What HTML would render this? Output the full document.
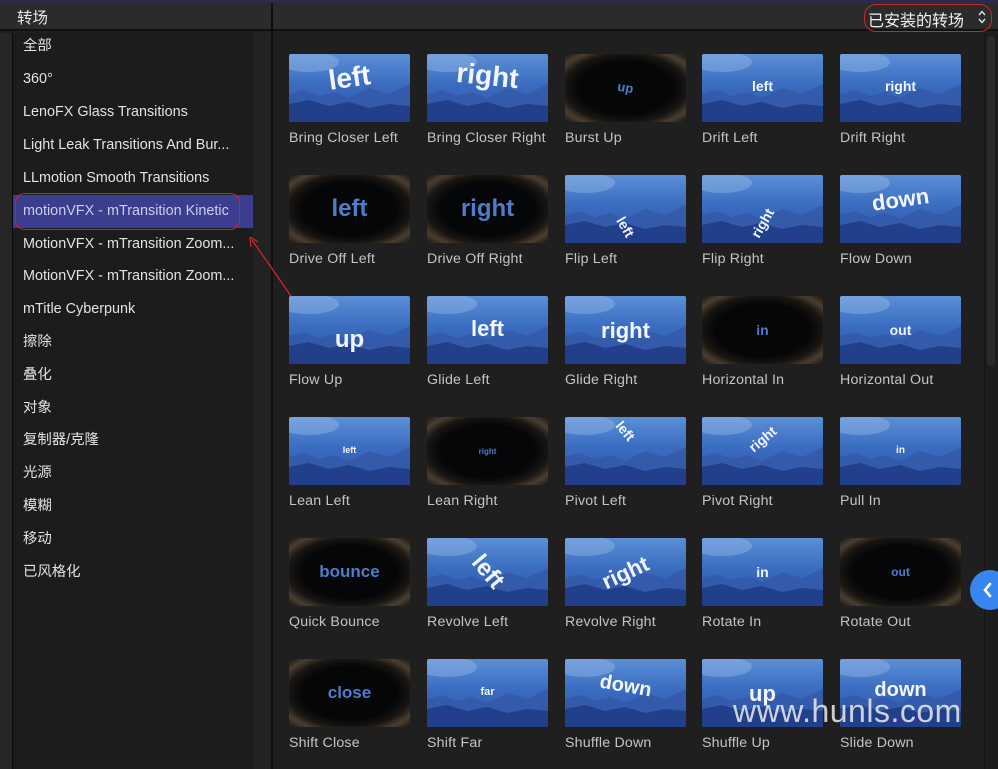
<!DOCTYPE html>
<html><head><meta charset="utf-8"><style>
*{margin:0;padding:0;box-sizing:border-box}
body{width:998px;height:769px;overflow:hidden;background:#1f1f1f;font-family:"Liberation Sans","Noto Sans CJK SC",sans-serif;position:relative}
.abs{position:absolute}
.side-item{position:absolute;left:23px;font-size:14.4px;color:#e2e2e2;line-height:20px;white-space:nowrap}
.th{position:absolute;width:121px;height:68px;overflow:hidden;border-radius:2px}
.blue{background:linear-gradient(180deg,#5b8fd6 0%,#3a6cc0 45%,#2d54a8 100%)}
.dark{background:radial-gradient(ellipse at 50% 50%,#050608 55%,#1a1612 72%,#4a3e30 85%,#1a1612 100%)}
.th svg{position:absolute;left:0;bottom:0}
.tt{position:absolute;width:100%;text-align:center;font-weight:bold;color:#f4f6ff;white-space:nowrap}
.dk .tt{color:#4f7ccc}
.lb{position:absolute;font-size:14.2px;color:#c4c4c4;white-space:nowrap;letter-spacing:0.2px}
</style></head><body>
<div class="abs" style="left:0;top:0;width:998px;height:3px;background:#2a2a4a"></div>
<div class="abs" style="left:0;top:3px;width:998px;height:28px;background:#2b2b2b;border-bottom:2px solid #111"></div>
<div class="abs" style="left:271px;top:3px;width:2px;height:766px;background:#0e0e0e"></div>
<div class="abs" style="left:17px;top:6px;font-size:15.5px;color:#e6e6e6">转场</div>
<div class="abs" style="left:864px;top:4px;width:128px;height:28px;border:1.5px solid #c8282c;border-radius:12px"></div>
<div class="abs" style="left:868px;top:7px;font-size:16px;color:#f0f0f0">已安装的转场</div>
<svg class="abs" style="left:977px;top:9px" width="10" height="16"><path d="M2 6 L5 2.5 L8 6 M2 10 L5 13.5 L8 10" stroke="#ddd" stroke-width="1.5" fill="none"/></svg>
<div class="abs" style="left:0;top:33px;width:12px;height:736px;background:#262626"></div>
<div class="abs" style="left:12px;top:33px;width:1px;height:736px;background:#0c0c0c"></div>
<div class="abs" style="left:13px;top:33px;width:240px;height:736px;background:#1c1c1c"></div>
<div class="abs" style="left:253px;top:33px;width:18px;height:736px;background:#222"></div>
<div class="abs" style="left:13px;top:195px;width:240px;height:33px;background:#3b3e8e"></div>
<div class="abs" style="left:15px;top:193px;width:225px;height:37px;border:1.5px solid #c8282c;border-radius:10px"></div>
<div class="side-item" style="top:36px">全部</div>
<div class="side-item" style="top:69px">360°</div>
<div class="side-item" style="top:102px">LenoFX Glass Transitions</div>
<div class="side-item" style="top:135px">Light Leak Transitions And Bur...</div>
<div class="side-item" style="top:168px">LLmotion Smooth Transitions</div>
<div class="side-item" style="top:201px;color:#c9cdf2">motionVFX - mTransition Kinetic</div>
<div class="side-item" style="top:234px">MotionVFX - mTransition Zoom...</div>
<div class="side-item" style="top:266px">MotionVFX - mTransition Zoom...</div>
<div class="side-item" style="top:299px">mTitle Cyberpunk</div>
<div class="side-item" style="top:332px">擦除</div>
<div class="side-item" style="top:365px">叠化</div>
<div class="side-item" style="top:398px">对象</div>
<div class="side-item" style="top:430px">复制器/克隆</div>
<div class="side-item" style="top:463px">光源</div>
<div class="side-item" style="top:496px">模糊</div>
<div class="side-item" style="top:529px">移动</div>
<div class="side-item" style="top:562px">已风格化</div>
<svg class="abs" style="left:240px;top:230px" width="70" height="80"><path d="M58 76 L12 10" stroke="#c8282c" stroke-width="1.3"/><path d="M10 7 L11 17 M10 7 L18 12" stroke="#c8282c" stroke-width="1.3" fill="none"/></svg>
<div class="abs" style="left:984px;top:33px;width:14px;height:736px;background:#1c1c1c;border-left:1px solid #151515"></div>
<div class="abs" style="left:987px;top:36px;width:8px;height:330px;background:#2a2a2a;border-radius:4px"></div>
<div id="grid"></div>
<script>
const items=[
["Bring Closer Left","b","left",28,8,-8],["Bring Closer Right","b","right",28,6,6],["Burst Up","d","up",13,26,10],["Drift Left","b","left",14,24,0],["Drift Right","b","right",14,24,0],
["Drive Off Left","d","left",24,20,0],["Drive Off Right","d","right",24,20,0],["Flip Left","b","left",14,44,60],["Flip Right","b","right",14,40,-60],["Flow Down","b","down",22,12,-8],
["Flow Up","b","up",24,30,0],["Glide Left","b","left",22,20,0],["Glide Right","b","right",22,22,0],["Horizontal In","d","in",14,26,0],["Horizontal Out","b","out",14,26,0],
["Lean Left","b","left",9,28,0],["Lean Right","d","right",8,30,0],["Pivot Left","b","left",14,6,50],["Pivot Right","b","right",14,14,-40],["Pull In","b","in",10,28,0],
["Quick Bounce","d","bounce",17,24,0],["Revolve Left","b","left",24,20,50],["Revolve Right","b","right",22,22,-25],["Rotate In","b","in",14,26,0],["Rotate Out","d","out",12,27,0],
["Shift Close","d","close",17,24,0],["Shift Far","b","far",11,27,0],["Shuffle Down","b","down",20,16,10],["Shuffle Up","b","up",22,22,0],["Slide Down","b","down",20,20,0]];
const xs=[289,427,565,702,840],ys=[54,175,296,417,538,659];
let h="";
items.forEach((it,i)=>{const x=xs[i%5],y=ys[Math.floor(i/5)];
const dark=it[1]=="d";
h+=`<div class="th ${dark?'dark dk':'blue'}" style="left:${x}px;top:${y}px">`;
if(!dark)h+=`<svg width="121" height="68"><path d="M0 40 L15 36 L30 42 L45 38 L60 44 L80 34 L100 40 L121 30 L121 68 L0 68Z" fill="#3459a8" opacity=".8"/><path d="M0 50 L20 46 L40 52 L60 48 L80 54 L100 50 L121 52 L121 68 L0 68Z" fill="#213f8a"/><ellipse cx="20" cy="8" rx="30" ry="10" fill="#a9c6ee" opacity=".35"/></svg>`;
h+=`<div class="tt" style="top:${it[4]}px;font-size:${it[3]}px;transform:rotate(${it[5]}deg)">${it[2]}</div></div>`;
h+=`<div class="lb" style="left:${x}px;top:${y+76}px">${it[0]}</div>`;});
document.getElementById("grid").innerHTML=h;
</script>
<div class="abs" style="left:970px;top:570px;width:40px;height:40px;border-radius:20px;background:#3a86f0"></div>
<svg class="abs" style="left:982px;top:582px" width="12" height="16"><path d="M8 2 L3 8 L8 14" stroke="#fff" stroke-width="2.6" fill="none" stroke-linecap="round"/></svg>
<div class="abs" style="left:733px;top:693px;font-size:32px;color:rgba(235,235,235,.85);letter-spacing:0.5px">www.hunls.com</div>
</body></html>
